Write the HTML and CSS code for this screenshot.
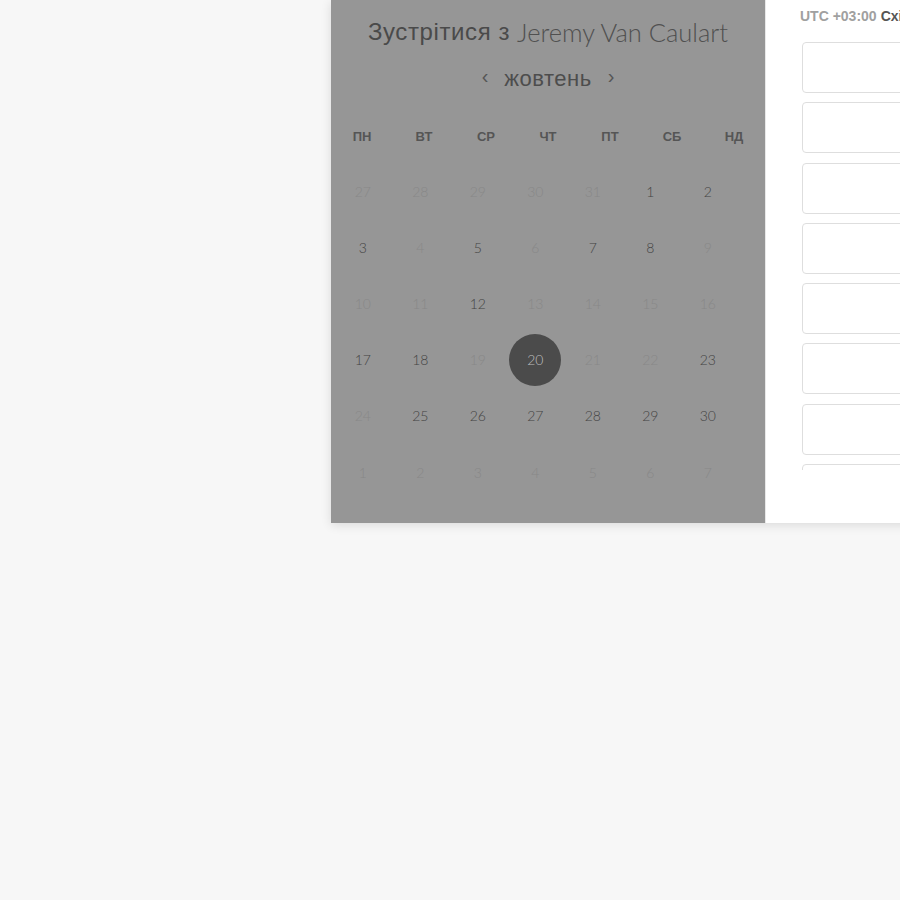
FILE: index.html
```html
<!DOCTYPE html>
<html lang="uk">
<head>
<meta charset="utf-8">
<link rel="stylesheet" href="styles.css">
</head>
<body>
<div class="stage">
  <div class="card">
    <section class="cal">
      <h1 class="title"><span class="t-ua">Зустрітися з</span> <span class="t-name">Jeremy Van Caulart</span></h1>
      <div class="month"><span class="arrow">‹</span><span class="mname">жовтень</span><span class="arrow">›</span></div>
      <div class="wdays">
        <span>ПН</span><span>ВТ</span><span>СР</span><span>ЧТ</span><span>ПТ</span><span>СБ</span><span>НД</span>
      </div>
      <div class="days">
        <span class="off">27</span><span class="off">28</span><span class="off">29</span><span class="off">30</span><span class="off">31</span><span>1</span><span>2</span>
        <span>3</span><span class="off">4</span><span>5</span><span class="off">6</span><span>7</span><span>8</span><span class="off">9</span>
        <span class="off">10</span><span class="off">11</span><span>12</span><span class="off">13</span><span class="off">14</span><span class="off">15</span><span class="off">16</span>
        <span>17</span><span>18</span><span class="off">19</span><span class="sel"><b>20</b></span><span class="off">21</span><span class="off">22</span><span>23</span>
        <span class="off">24</span><span>25</span><span>26</span><span>27</span><span>28</span><span>29</span><span>30</span>
        <span class="off">1</span><span class="off">2</span><span class="off">3</span><span class="off">4</span><span class="off">5</span><span class="off">6</span><span class="off">7</span>
      </div>
    </section>
    <section class="times">
      <div class="tz">UTC +03:00 <strong>Східноєвропейський час</strong></div>
      <div class="slots">
        <div class="slot"></div><div class="slot"></div><div class="slot"></div><div class="slot"></div>
        <div class="slot"></div><div class="slot"></div><div class="slot"></div><div class="slot"></div>
      </div>
    </section>
  </div>
</div>
</body>
</html>
```

FILE: styles.css
```css
html, body {
  margin: 0;
  padding: 0;
  background: #f7f7f7;
  overflow: hidden;
  height: 900px;
}
.stage {
  width: 900px;
  height: 900px;
  overflow: hidden;
}
.card {
  margin-left: 331px;
  width: 700px;
  height: 523px;
  display: flex;
  background: #fff;
  box-shadow: 0 2px 10px rgba(0,0,0,0.12);
}
.cal {
  width: 434px;
  flex: none;
  background: #969696;
  display: flex;
  flex-direction: column;
  align-items: stretch;
}
.title {
  margin: 0;
  height: 64px;
  display: flex;
  align-items: center;
  justify-content: center;
  gap: 7px;
  font-weight: normal;
  color: #4a4a4a;
  white-space: nowrap;
}
.t-ua {
  font-family: "Liberation Sans", Arial, sans-serif;
  font-size: 24px;
  letter-spacing: 0.6px;
}
.t-name {
  font-family: Lato, "Liberation Sans", sans-serif;
  font-weight: 300;
  font-size: 25.5px;
  color: #505050;
}
.month {
  height: 30px;
  display: flex;
  align-items: center;
  justify-content: center;
  font-family: "Liberation Sans", Arial, sans-serif;
  color: #4d4d4d;
}
.mname {
  font-size: 22px;
  letter-spacing: 0.5px;
  margin: 0 16px 0 16px;
}
.arrow {
  font-size: 20px;
  color: #555;
  position: relative;
  top: -3px;
}
.wdays {
  margin-top: 28px;
  height: 28px;
  display: grid;
  grid-template-columns: repeat(7, 62px);
  align-items: center;
  justify-items: center;
  font-family: "Liberation Sans", Arial, sans-serif;
  font-weight: bold;
  font-size: 13px;
  color: #555;
}
.days {
  margin-top: 13px;
  margin-left: 3px;
  width: 402.5px;
  display: grid;
  grid-template-columns: repeat(7, 57.5px);
  grid-auto-rows: 56.2px;
  align-items: center;
  justify-items: center;
  font-family: Lato, "Liberation Sans", sans-serif;
  font-weight: 300;
  font-size: 14px;
  color: #444;
}
.days .off {
  color: #888;
}
.days .sel b {
  width: 52px;
  height: 52px;
  border-radius: 50%;
  background: #4b4b4b;
  color: #bdbdbd;
  font-weight: 300;
  display: flex;
  align-items: center;
  justify-content: center;
}
.times {
  flex: 1;
  background: #fff;
  padding-left: 34px;
  border-left: 1px solid #e8e8e8;
}
.tz {
  height: 31px;
  display: flex;
  align-items: center;
  white-space: nowrap;
  font-family: "Liberation Sans", Arial, sans-serif;
  font-weight: bold;
  font-size: 14px;
  color: #a0a0a0;
}
.tz strong {
  color: #555;
  margin-left: 4px;
}
.slots {
  margin-top: 11px;
  margin-left: 2px;
  height: 428px;
  overflow: hidden;
  display: flex;
  flex-direction: column;
  gap: 9.3px;
}
.slot {
  flex: none;
  height: 49px;
  width: 300px;
  border: 1px solid #dedede;
  border-radius: 4px;
}
```
